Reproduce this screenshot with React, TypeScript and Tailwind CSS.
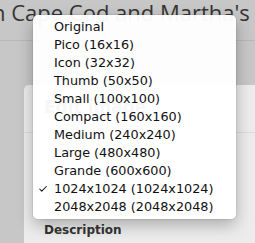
import { Check } from 'lucide-react';

const sizes = [
  'Original',
  'Pico (16x16)',
  'Icon (32x32)',
  'Thumb (50x50)',
  'Small (100x100)',
  'Compact (160x160)',
  'Medium (240x240)',
  'Large (480x480)',
  'Grande (600x600)',
  '1024x1024 (1024x1024)',
  '2048x2048 (2048x2048)',
];

const selected = '1024x1024 (1024x1024)';

const SizeMenu = () => (
  <ul className="absolute left-[33px] top-[15px] w-[203px] rounded-[5px] bg-white/[0.96] py-[3px] shadow-[0_6px_16px_rgba(0,0,0,0.28),0_0_0_1px_rgba(0,0,0,0.06)] [font-family:'DejaVu_Sans',sans-serif] text-[12.8px] text-[#111]">
    {sizes.map((size) => (
      <li key={size} className="relative flex h-[18px] items-center pl-[21px]">
        {size === selected && (
          <Check size={10} strokeWidth={2.5} className="absolute left-[5px] top-[4px] text-[#111]" />
        )}
        {size}
      </li>
    ))}
  </ul>
);

export default function App() {
  return (
    <div className="relative h-[243px] w-[255px] overflow-hidden bg-[#c7c7c7]">
      <div className="h-[41px] border-b border-[#b9b9b9]">
        <p className="-ml-[8px] whitespace-nowrap [font-family:'Open_Sans',sans-serif] text-[22px] leading-[24px] text-[#353535]">
          n Cape Cod and Martha's
        </p>
      </div>

      <div className="ml-[24px] mt-[44px] h-[200px] rounded-tl-[5px] bg-[#ececec]">
        <div className="h-[48px] border-b border-[#dcdcdc] px-[20px] pt-[10px]">
          <h2 className="[font-family:'DejaVu_Sans',sans-serif] text-[17px] font-bold text-[#333]">Edit image</h2>
        </div>
        <div className="px-[20px] pt-[88px]">
          <p className="[font-family:'DejaVu_Sans',sans-serif] text-[12px] font-bold text-[#333]">Description</p>
        </div>
      </div>

      <SizeMenu />
    </div>
  );
}
